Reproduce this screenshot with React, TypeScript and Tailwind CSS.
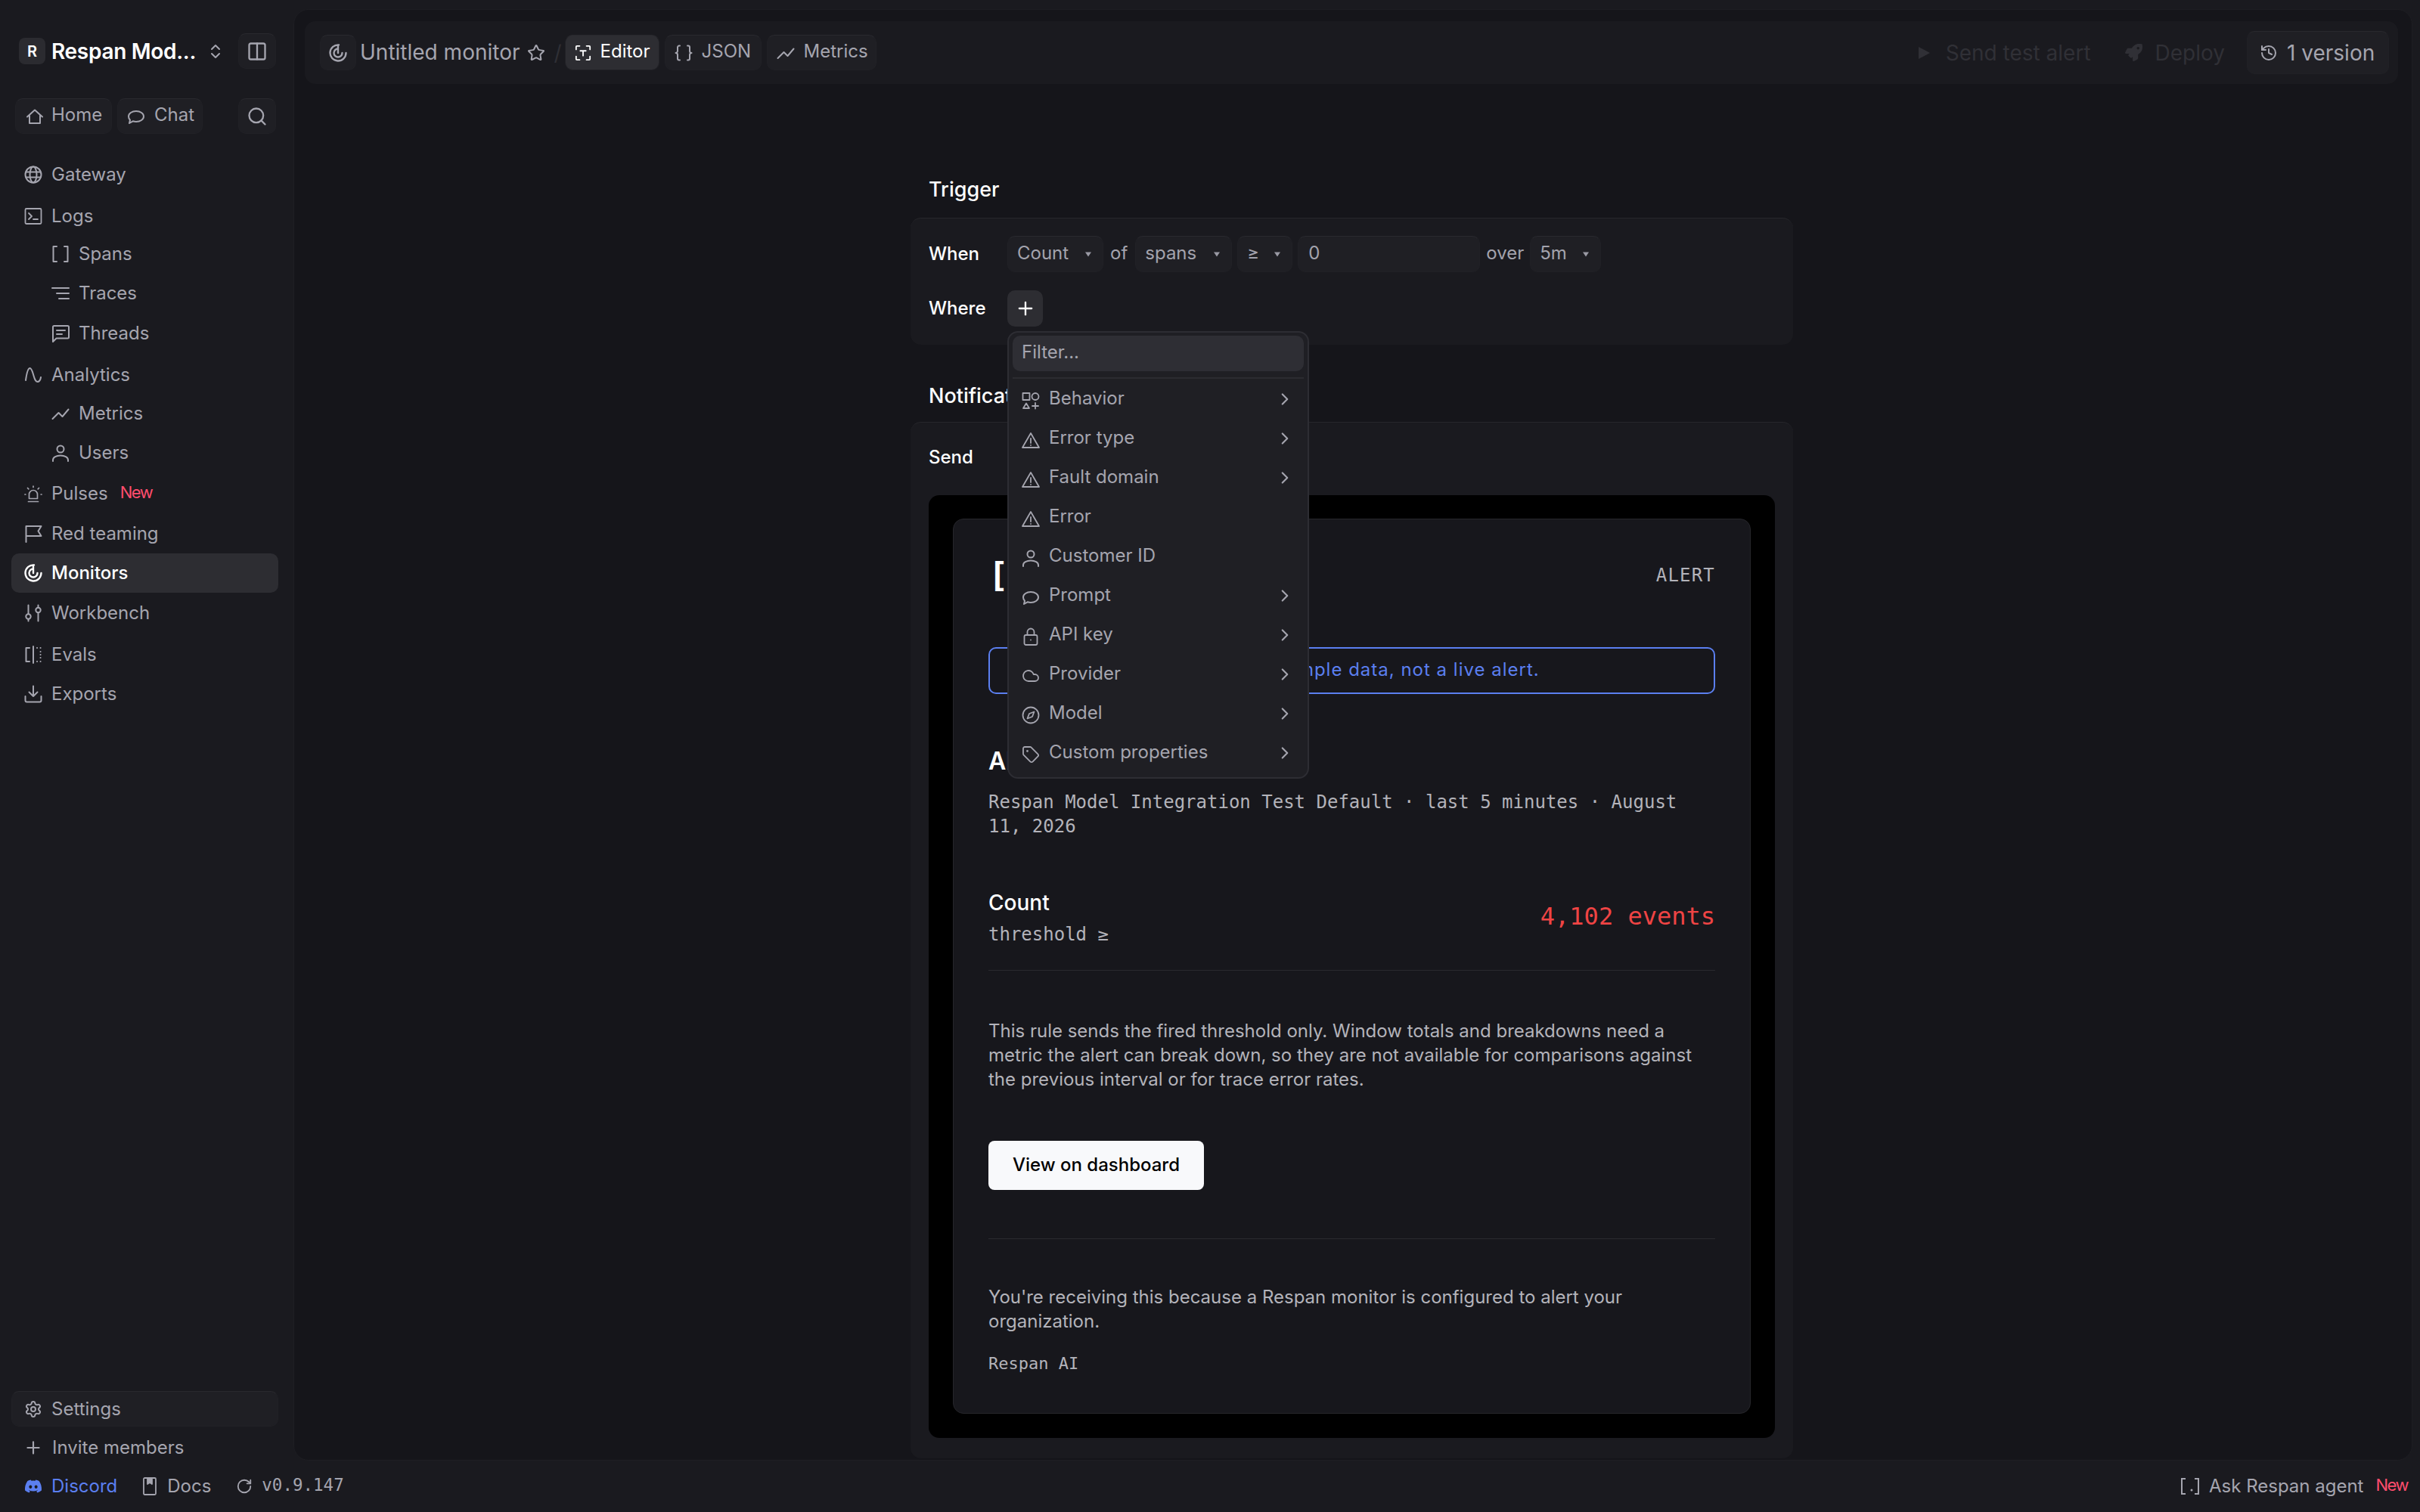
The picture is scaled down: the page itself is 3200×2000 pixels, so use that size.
import type { ReactNode } from "react";
import { ChevronRight, ChevronsUpDown, Cloud, Columns2, History, Plus, RotateCw, Search, Settings, Star, Tag } from "lucide-react";
import { FaDiscord, FaRocket } from "react-icons/fa";

function Ic({ children, className = "w-[24px] h-[24px]", sw = 2 }: { children: ReactNode; className?: string; sw?: number }) {
  return (
    <svg viewBox="0 0 24 24" fill="none" stroke="currentColor" strokeWidth={sw} strokeLinecap="round" strokeLinejoin="round" className={`shrink-0 ${className}`}>
      {children}
    </svg>
  );
}

const HomeI = () => <Ic><path d="M2 12.500 12 3.500l10 9M5 10.500V21h14V10.500" /></Ic>;
const ChatI = () => <Ic><path d="M12 5c5.500 0 10 3 10 7s-4.500 7-10 7c-1.500 0-3-.3-4.300-.7L3 21l1-4.200C2.700 15.500 2 13.800 2 12c0-4 4.500-7 10-7z" /></Ic>;
const GlobeI = () => <Ic><circle cx="12" cy="12" r="10.500" /><ellipse cx="12" cy="12" rx="4.500" ry="10.500" /><path d="M2.500 8.500h19M2.500 15.500h19" /></Ic>;
const TermI = () => <Ic sw={1.8}><rect x="1.500" y="2" width="21" height="20" rx="1.500" /><path d="m6 8 4 4-4 4M12 16h6" /></Ic>;
const BracketI = () => <Ic><path d="M7 2H2.500v20H7M17 2h4.500v20H17" /></Ic>;
const TracesI = () => <Ic><path d="M1 5h22M7 12h16M10 19h13" /></Ic>;
const ThreadI = () => <Ic><path d="M2 3.500a1.500 1.500 0 0 1 1.500-1.500h18a1.500 1.500 0 0 1 1.500 1.500V17a1.500 1.500 0 0 1-1.500 1.500H6.500L2 23zM7 8h11M7 13h7" /></Ic>;
const WaveI = () => <Ic><path d="M2 19C3.500 8 5 3 7.500 3S11 8 12.500 13s2.500 8 5 8 4-2.500 4.500-6" /></Ic>;
const ChartI = () => <Ic><path d="m1.500 19 8-8 5 5L22.500 6.500" /></Ic>;
const UserI = () => <Ic><circle cx="12" cy="7" r="4.500" /><path d="M2 23v-1.500C2 18 6.500 15.500 12 15.500s10 2.500 10 6V23" /></Ic>;
const SirenI = () => <Ic sw={1.7}><path d="M5.500 22.500h13M6.500 18.500V13a5.500 5.500 0 0 1 11 0v5.500zM12 2v1.500M4.500 4.500l1.300 1.300M19.500 4.500l-1.300 1.300M1 13h.8M22.200 13h.8" /></Ic>;
const FlagI = () => <Ic><path d="M2.500 23V2h20l-4 6.500 4 6.500h-20" /></Ic>;
const RadarI = () => <Ic sw={2.400}><path d="M13 1.500A10.500 10.500 0 1 0 22.500 12M12 6.500a5.500 5.500 0 1 0 5.500 5.500M12 12V3.500" /></Ic>;
const SlidersI = () => <Ic><path d="M5.500 1.500V13M18.500 1.500v3M18.500 11.500v11M5.500 20v2.500" /><circle cx="5.500" cy="16.500" r="3.200" /><circle cx="18.500" cy="8" r="3.200" /></Ic>;
const EvalsI = () => <Ic><path d="M7 3H2.500v18H7M12 1v22" /><path d="M17 3h.1M21.500 3h.1M21.500 8h.1M21.500 12h.1M21.500 16h.1M21.500 21h.1M17 21h.1" /></Ic>;
const DownI = () => <Ic><path d="M12 1.500V15M6.500 9.500 12 15l5.500-5.500M1.500 15v5.500a2 2 0 0 0 2 2h17a2 2 0 0 0 2-2V15" /></Ic>;
const BookI = () => <Ic sw={1.800}><rect x="4" y="1" width="16" height="22" rx="1.500" /><path d="M9 1v8l3-2 3 2V1z" fill="currentColor" /></Ic>;
const ScanI = ({ c = "w-[22px] h-[22px]" }: { c?: string }) => <Ic className={c}><path d="M2 7V3a1 1 0 0 1 1-1h4M17 2h4a1 1 0 0 1 1 1v4M22 17v4a1 1 0 0 1-1 1h-4M7 22H3a1 1 0 0 1-1-1v-4M8 9h8M12 9v7" /></Ic>;
const BraceI = () => <Ic className="w-[24px] h-[24px]"><path d="M7 2.500H6a2 2 0 0 0-2 2v5a2.500 2.500 0 0 1-2.500 2.500A2.500 2.500 0 0 1 4 14.500v5a2 2 0 0 0 2 2h1M17 2.500h1a2 2 0 0 1 2 2v5a2.500 2.500 0 0 0 2.500 2.500 2.500 2.500 0 0 0-2.500 2.500v5a2 2 0 0 1-2 2h-1" /></Ic>;
const ShapesI = () => <Ic sw={1.800}><rect x="1.500" y="2" width="9" height="9" /><circle cx="18" cy="6.500" r="4.500" /><path d="m6 15.500 4 6.500H2zM18 15v7.500M14 19h8" /></Ic>;
const WarnI = () => <Ic sw={1.800}><path d="M12 3 23 22H1zM12 10v6M12 19v.1" /></Ic>;
const LockI = () => <Ic sw={1.800}><rect x="3.500" y="10" width="17" height="13" rx="2" /><path d="M7.500 10V6a4.500 4.500 0 0 1 9 0v4M12 16.500v.1" /></Ic>;
const CompassI = () => <Ic sw={1.800}><circle cx="12" cy="12" r="10.500" /><path d="m16.500 7.500-6.500 2.500-2.500 6.500 6.500-2.500z" /></Ic>;
const CaretD = () => <svg viewBox="0 0 10 10" className="w-[10px] h-[10px] shrink-0 text-[#9a9aa4]" fill="currentColor"><path d="M1 2.500h8L5 8.500z" /></svg>;

type NavRow = { label: string; icon: ReactNode; sub?: boolean; cls?: string; active?: boolean; badge?: boolean };

const navRows: NavRow[] = [
  { label: "Gateway", icon: <GlobeI /> },
  { label: "Logs", icon: <TermI />, cls: "mt-[3px]" },
  { label: "Spans", icon: <BracketI />, sub: true, cls: "mt-[-2px]" },
  { label: "Traces", icon: <TracesI />, sub: true },
  { label: "Threads", icon: <ThreadI />, sub: true, cls: "mt-[1px]" },
  { label: "Analytics", icon: <WaveI />, cls: "mt-[3px]" },
  { label: "Metrics", icon: <ChartI />, sub: true, cls: "mt-[-1px]" },
  { label: "Users", icon: <UserI />, sub: true },
  { label: "Pulses", icon: <SirenI />, cls: "mt-[2px]", badge: true },
  { label: "Red teaming", icon: <FlagI />, cls: "mt-[1px]" },
  { label: "Monitors", icon: <RadarI />, active: true },
  { label: "Workbench", icon: <SlidersI />, cls: "mt-[1px]" },
  { label: "Evals", icon: <EvalsI />, cls: "mt-[3px]" },
  { label: "Exports", icon: <DownI /> },
];

const menuRows: { label: string; icon: ReactNode; more?: boolean }[] = [
  { label: "Behavior", icon: <ShapesI />, more: true },
  { label: "Error type", icon: <WarnI />, more: true },
  { label: "Fault domain", icon: <WarnI />, more: true },
  { label: "Error", icon: <WarnI /> },
  { label: "Customer ID", icon: <UserI /> },
  { label: "Prompt", icon: <ChatI />, more: true },
  { label: "API key", icon: <LockI />, more: true },
  { label: "Provider", icon: <Cloud size={24} strokeWidth={1.8} />, more: true },
  { label: "Model", icon: <CompassI />, more: true },
  { label: "Custom properties", icon: <Tag size={24} strokeWidth={1.8} />, more: true },
];

const btn = "flex items-center rounded-[10px] bg-[#1f1f24] border border-[#212126] border-t-[#29292e]";
const mono = "font-['DejaVu_Sans_Mono',monospace]";
const newTag = "text-[22px] tracking-[-1.500px] text-[#ff4d6d]";

function Select({ label, w, gap = "" }: { label: string; w: string; gap?: string }) {
  return (
    <div className={`${btn} ${w} h-[48px] justify-between pl-[12px] pr-[14px] text-[#a3a3ad] ${gap}`}>
      <span className="-mt-[2px]">{label}</span>
      <CaretD />
    </div>
  );
}

function Sidebar() {
  return (
    <aside className="w-[388px] shrink-0 flex flex-col text-[24px] text-[#a5a5af]">
      <div className="h-[45px] mt-[45px] ml-[25px] mr-[23px] flex items-center">
        <div className="w-[35px] h-[35px] rounded-[8px] bg-[#2b2b30] flex items-center justify-center text-white text-[20px] font-semibold">R</div>
        <span className="ml-[8px] text-[28px] font-semibold text-white whitespace-nowrap tracking-[-0.300px]">Respan Mod...</span>
        <ChevronsUpDown size={24} className="ml-[14px] text-[#a5a5af]" />
        <div className={`${btn} ml-auto w-[50px] h-[47px] justify-center`}>
          <Columns2 size={28} />
        </div>
      </div>
      <div className="h-[47px] mt-[40px] ml-[20px] mr-[23px] flex items-center gap-[7px]">
        <div className={`${btn} w-[128px] h-[47px] pl-[13px] gap-[10px]`}><HomeI /><span className="-mt-[4px]">Home</span></div>
        <div className={`${btn} w-[113px] h-[47px] pl-[12px] gap-[12px]`}><ChatI /><span className="-mt-[4px]">Chat</span></div>
        <div className={`${btn} ml-auto w-[50px] h-[47px] justify-center`}><Search size={28} /></div>
      </div>
      <nav className="mt-[28px] ml-[15px] mr-[20px] flex flex-col">
        {navRows.map((r) => (
          <div
            key={r.label}
            className={`h-[52px] flex items-center rounded-[10px] shrink-0 gap-[12px] ${r.sub ? "pl-[53px]" : "pl-[17px]"} ${r.active ? "bg-[#2d2d32] text-white font-medium" : ""} ${r.cls ?? ""}`}
          >
            {r.icon}
            <span>{r.label}</span>
            {r.badge && <span className={`ml-[4px] -mt-[4px] ${newTag}`}>New</span>}
          </div>
        ))}
      </nav>
      <div className="mt-auto -mb-[9px] ml-[15px] mr-[20px] flex flex-col">
        <div className={`${btn} h-[47px] pl-[16px] gap-[12px]`}><Settings size={24} /><span>Settings</span></div>
        <div className="h-[52px] mt-[2px] flex items-center pl-[16px] gap-[12px]"><Plus size={26} /><span>Invite members</span></div>
      </div>
    </aside>
  );
}

function Footer() {
  return (
    <footer className="relative h-[68px] shrink-0 flex items-center pl-[32px] pr-[16px] text-[24px] text-[#a5a5af]">
      <FaDiscord size={24} className="text-[#5b7ff0]" />
      <span className="ml-[12px] text-[#5b7ff0]">Discord</span>
      <span className="ml-[31px]"><BookI /></span>
      <span className="ml-[11px]">Docs</span>
      <RotateCw size={22} className="ml-[33px]" />
      <span className={`ml-[12px] text-[22.500px] ${mono} -mt-[2px]`}>v0.9.147</span>
      <div className="ml-auto flex items-center">
        <svg viewBox="0 0 26 24" className="w-[26px] h-[24px]" fill="none" stroke="currentColor" strokeWidth="2"><path d="M7 2H2v20h5M19 2h5v20h-5" /><circle cx="15" cy="17" r="1.500" fill="currentColor" stroke="none" /></svg>
        <span className="ml-[12px]">Ask Respan agent</span>
        <span className={`ml-[16px] -mt-[4px] ${newTag}`}>New</span>
      </div>
    </footer>
  );
}

function TopBar() {
  return (
    <div className="h-[83px] mt-[15px] ml-[14px] mr-[18px] shrink-0 rounded-[14px] bg-[#1a1a1f] flex items-center pl-[20px] pr-[12px] text-[24px] text-[#a5a5af]">
      <div className={`${btn} w-[48px] h-[47px] justify-center`}><RadarI /></div>
      <span className="ml-[5px] text-[28px] text-[#a5a5af] font-normal -mt-[2px]">Untitled monitor</span>
      <Star size={24} className="ml-[10px]" />
      <span className="ml-[11px] text-[#2f2f35] text-[28px]">/</span>
      <div className={`${btn} ml-[4px] w-[125px] h-[47px] pl-[12px] gap-[12px] !bg-[#2d2d32] text-white`}><ScanI /><span className="-mt-[4px]">Editor</span></div>
      <div className={`${btn} ml-[7px] w-[128px] h-[47px] pl-[12px] gap-[12px]`}><BraceI /><span className="-mt-[4px]">JSON</span></div>
      <div className={`${btn} ml-[7px] w-[145px] h-[47px] pl-[12px] gap-[12px]`}><ChartI /><span className="-mt-[4px]">Metrics</span></div>
      <div className="ml-auto flex items-center text-[28px] text-[#303036]">
        <svg viewBox="0 0 16 24" fill="currentColor" className="w-[16px] h-[24px]"><path d="M1 4l15 8-15 8z" /></svg>
        <span className="ml-[21px]">Send test alert</span>
        <FaRocket size={23} className="ml-[45px]" />
        <span className="ml-[17px]">Deploy</span>
        <div className={`${btn} ml-[29px] w-[188px] h-[57px] pl-[16px] gap-[12px] text-[#a5a5af]`}><History size={24} /><span>1 version</span></div>
      </div>
    </div>
  );
}

function FilterMenu() {
  return (
    <div className="absolute left-[128px] top-[327px] z-10 w-[399px] h-[592px] rounded-[14px] bg-[#1f1f24] border-[2px] border-[#2d2d33] pt-[5px] flex flex-col text-[#a5a5af] text-[24px]">
      <div className="mx-[5px] h-[47px] shrink-0 rounded-[10px] bg-[#2e2e34] flex items-center pl-[12px] -mt-[1px]">
        <span className="-mt-[4px]">Filter...</span>
      </div>
      <div className="mx-[5px] mt-[8px] h-[2px] shrink-0 bg-[#2b2b31]" />
      <div className="mt-[1px] flex flex-col">
        {menuRows.map((m) => (
          <div key={m.label} className="h-[52px] shrink-0 flex items-center pl-[17px] pr-[17px] gap-[12px]">
            <span className="mt-[3px]">{m.icon}</span>
            <span className="-mt-[2px]">{m.label}</span>
            {m.more && <ChevronRight size={26} className="ml-auto" />}
          </div>
        ))}
      </div>
    </div>
  );
}

function EmailCard() {
  return (
    <div className="mx-[32px] mt-[30px] h-[1184px] rounded-[14px] bg-[#17171c] border border-[#26262b] px-[46px] pt-[44px] text-[24px] text-[#b3b3ba] overflow-hidden">
      <div className="h-[60px] flex items-center justify-between">
        <span className={`${mono} text-[44px] font-bold text-white`}>[.]</span>
        <span className={`${mono} text-[24px] tracking-[1.200px] text-[#b3b3ba]`}>ALERT</span>
      </div>
      <div className="mt-[65px] h-[62px] rounded-[10px] border-[2px] border-[#5b7ff0] flex items-center pl-[26px] text-[#5b7ff0] tracking-[1px]">
        <span className="-mt-[2px]">Test alert: this preview uses sample data, not a live alert.</span>
      </div>
      <div className="mt-[71px] h-[36px] flex items-center text-[32px] font-semibold text-white">Alert</div>
      <p className={`${mono} mt-[20px] text-[24px] leading-[32px]`}>Respan Model Integration Test Default · last 5 minutes · August 11, 2026</p>
      <div className="mt-[68px] pb-[31px] border-b border-[#2a2a2f] flex justify-between">
        <div>
          <div className="h-[34px] flex items-center text-[28px] font-medium text-white">Count</div>
          <div className={`${mono} mt-[9px] text-[24px] leading-[32px]`}>threshold ≥</div>
        </div>
        <div className={`${mono} text-[32px] text-[#ef4444] mt-[11px] h-[38px]`}>4,102 events</div>
      </div>
      <p className="mt-[64px] leading-[32px]">This rule sends the fired threshold only. Window totals and breakdowns need a metric the alert can break down, so they are not available for comparisons against the previous interval or for trace error rates.</p>
      <div className="mt-[65px] w-[285px] h-[65px] rounded-[8px] bg-[#f8f9fb] flex items-center justify-center text-black font-medium">View on dashboard</div>
      <div className="mt-[64px] border-t border-[#2a2a2f]" />
      <p className="mt-[61px] leading-[32px]">You're receiving this because a Respan monitor is configured to alert your organization.</p>
      <p className={`${mono} mt-[25px] text-[22px] leading-[30px]`}>Respan AI</p>
    </div>
  );
}

export default function App() {
  return (
    <div className="w-[3200px] h-[2000px] bg-[#1a1a1f] flex flex-col font-['Inter',sans-serif] overflow-hidden">
      <div className="flex flex-1 min-h-0">
        <Sidebar />
        <main className="flex-1 mt-[12px] mr-[10px] mb-0 min-h-0 rounded-[20px] bg-[#15151a] border border-[#1e1e23] flex flex-col overflow-hidden">
          <TopBar />
          <div className="relative w-[1167px] ml-[815px] text-[24px]">
            <h2 className="mt-[123px] ml-[24px] h-[34px] flex items-center text-[27px] font-medium text-white">Trigger</h2>
            <section className="mt-[20px] h-[168px] rounded-[14px] bg-[#1a1a1f] border-t border-[#26262b] px-[24px] pt-[23px]">
              <div className="h-[48px] flex items-center text-[#a3a3ad]">
                <span className="w-[104px] text-white font-medium">When</span>
                <Select label="Count" w="w-[127px]" />
                <span className="ml-[9px] -mt-[2px]">of</span>
                <Select label="spans" w="w-[128px]" gap="ml-[10px]" />
                <Select label="≥" w="w-[73px]" gap="ml-[7px]" />
                <div className={`${btn} ml-[7px] w-[241px] h-[48px] pl-[13px]`}><span className="-mt-[2px]">0</span></div>
                <span className="ml-[8px] -mt-[2px]">over</span>
                <Select label="5m" w="w-[94px]" gap="ml-[8px]" />
              </div>
              <div className="h-[48px] mt-[24px] flex items-center">
                <span className="w-[104px] text-white font-medium">Where</span>
                <div className="w-[47px] h-[48px] rounded-[10px] bg-[#2d2d32] flex items-center justify-center text-white"><Plus size={28} /></div>
              </div>
            </section>
            <FilterMenu />
            <h2 className="mt-[51px] ml-[24px] h-[34px] flex items-center text-[27px] font-medium text-white">Notifications</h2>
            <section className="mt-[17px] h-[1371px] rounded-[14px] bg-[#1a1a1f] border-t border-[#26262b] px-[24px] pt-[28px]">
              <div className="h-[36px] flex items-center text-white font-medium">Send</div>
              <div className="mt-[32px] h-[1247px] rounded-[14px] bg-black pt-[0.5px]">
                <EmailCard />
              </div>
            </section>
          </div>
        </main>
      </div>
      <Footer />
    </div>
  );
}
